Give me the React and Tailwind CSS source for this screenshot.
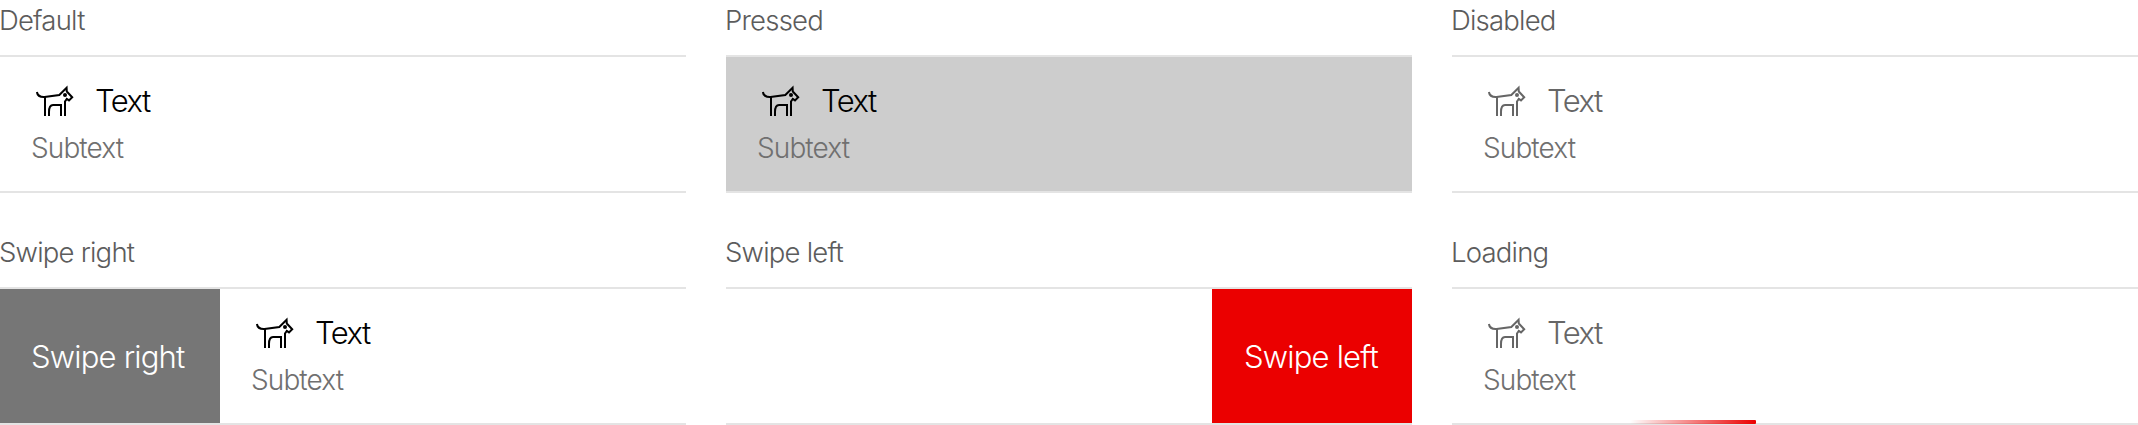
function DogIcon() {
  return (
    <svg
      className="size-10 shrink-0 overflow-visible"
      viewBox="0 1 40 40"
      fill="none"
      stroke="currentColor"
      strokeWidth="2"
      strokeLinejoin="miter"
      aria-hidden="true"
    >
      <path d="M4.900 12C5.400 15.400 8.300 17.200 12.500 17L27.300 15L34.600 7.700L34.800 11.500L40.200 17.200L37 20.400L34.800 18.900L33 21.500V36" />
      <path d="M13 17V36" />
      <path d="M17 36V32C17 27.500 18 25 21 25H29V36" />
      <circle cx="33" cy="15" r="2" fill="currentColor" stroke="none" />
    </svg>
  );
}

function Content({ muted = false }) {
  return (
    <div className="flex flex-col pl-8 pt-6">
      <div className={`flex h-10 items-center gap-[23px] ${muted ? "text-[#666666]" : "text-black"}`}>
        <DogIcon />
        <span className="text-[31px] leading-10 tracking-[-1.5px]">Text</span>
      </div>
      <span className="-ml-px mt-[11px] text-[28px] leading-8 tracking-[-0.9px] text-[#707070]">Subtext</span>
    </div>
  );
}

function Action({ children, className }) {
  return (
    <div className={`flex items-center pt-0.5 text-[31px] leading-10 tracking-[-0.8px] text-white ${className}`}>
      {children}
    </div>
  );
}

function Example({ label, pressed = false, children }) {
  return (
    <section className="flex flex-col">
      <h2 className="-ml-px h-[55px] pt-1 text-[27.5px] font-light leading-8 tracking-[-0.8px] text-[#5c5c5c]">{label}</h2>
      <div className={`relative flex h-[138px] border-y-2 border-[#e4e4e4] ${pressed ? "bg-[#cdcdcd]" : "bg-white"}`}>
        {children}
      </div>
    </section>
  );
}

export default function App() {
  return (
    <main className="grid h-[425px] w-[2138px] grid-cols-3 content-start gap-x-10 gap-y-[39px] overflow-hidden bg-white font-['Inter',sans-serif] font-light">
      <Example label="Default">
        <Content />
      </Example>
      <Example label="Pressed" pressed>
        <Content />
      </Example>
      <Example label="Disabled">
        <Content muted />
      </Example>
      <Example label="Swipe right">
        <Action className="w-[220px] bg-[#767676] pl-[31px]">Swipe right</Action>
        <Content />
      </Example>
      <Example label="Swipe left">
        <Action className="ml-auto w-[200px] bg-[#eb0000] pl-8">Swipe left</Action>
      </Example>
      <Example label="Loading">
        <Content muted />
        <div className="absolute -bottom-px left-[178px] h-1 w-[126px] rounded-r-[1px] bg-linear-to-r from-transparent to-[#eb0000]" />
      </Example>
    </main>
  );
}
